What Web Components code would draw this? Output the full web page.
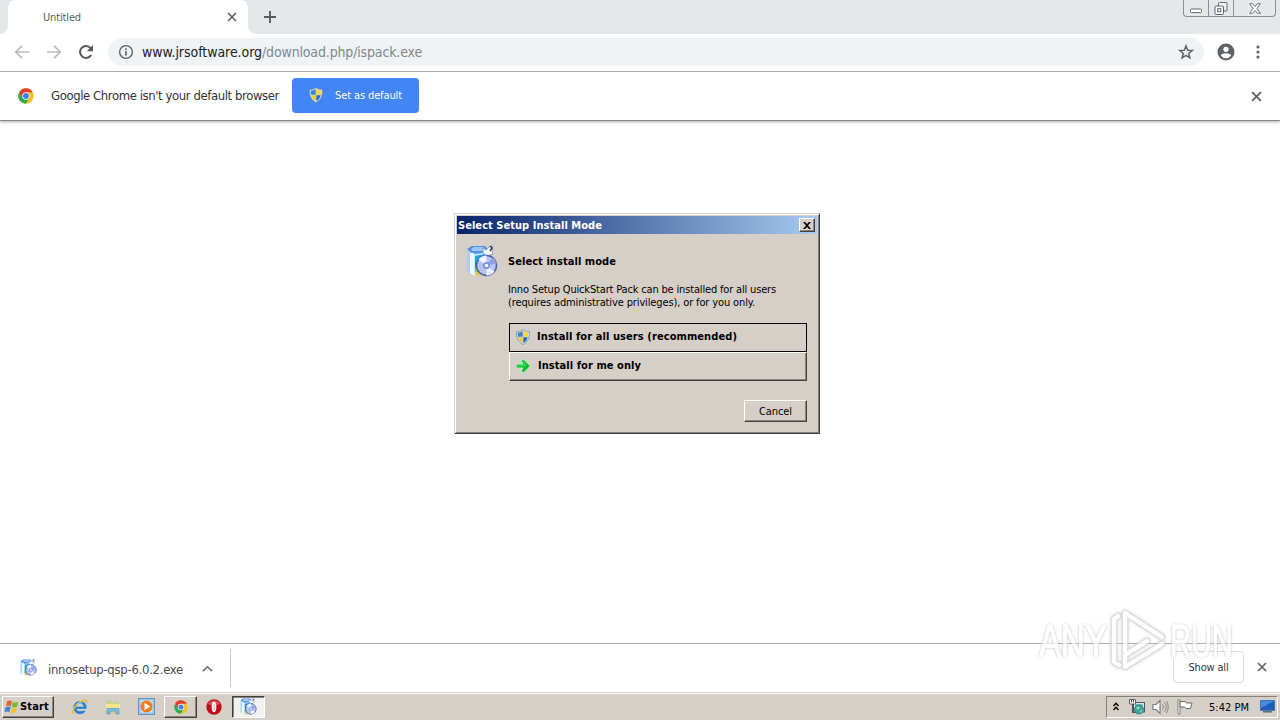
<!DOCTYPE html>
<html lang="en">
<head>
<meta charset="utf-8">
<title>Untitled</title>
<style>
  html, body {
    margin: 0;
    width: 1280px;
    height: 720px;
    overflow: hidden;
    background: #fff;
  }

  body {
    font-family: "DejaVu Sans Condensed", "DejaVu Sans", sans-serif;
    font-stretch: condensed;
    font-size: 11px;
    color: #000;
  }
</style>
</head>
<body>
<desktop-screen></desktop-screen>

<script>
/**
 * The drawings of every icon, by name: [viewBox, markup].
 */
const setupArt = `
  <path d="M1 4l5-3h13l4 4-2 4-13 1z" fill="#4f8ee0"/>
  <path d="M5 4l3-2h9l2 2-1 2H6z" fill="#9cc6f5"/>
  <path d="M1 4l3 5v20l-3-3z" fill="#a9cdf2"/>
  <path d="M4 8h4v23l-4-3z" fill="#eef9ff"/>
  <path d="M8 9l16-2v21L8 31z" fill="#bfe6fb"/>
  <path d="M9 11l10-2v8H9z" fill="#27a3e0"/>
  <path d="M9 17h8v10H9z" fill="#2f9b33"/>
  <path d="M9 23h5v4H9z" fill="#8cc63a"/><path d="M10 27h8v3l-8 1z" fill="#e8c53c"/>
  <path d="M17 3l3 2 3-3 4-1-1 4 1 4-6 2-4-3z" fill="#f5fbff" stroke="#7d94ba" stroke-width=".8"/>
  <path d="M24 1l2 2-2 3" fill="none" stroke="#335" stroke-width="1.5"/>
  <circle cx="20.500" cy="20.500" r="10" fill="#b7c3f4" stroke="#4a5fae" stroke-width="1.4"/>
  <path d="M20.500 20.500l-8-6a10 10 0 0 1 8-4zM20.500 20.500l8 6a10 10 0 0 1-8 4z" fill="#eef2ff"/>
  <path d="M20.500 20.500l10-2a10 10 0 0 0-4-6z" fill="#949fe6"/>
  <circle cx="20.500" cy="20.500" r="3.600" fill="#7f90d8"/><circle cx="20.500" cy="20.500" r="1.700" fill="#fff"/>`

const icons = {
  back: ['0 0 16 16', '<path d="M15 8H2M8 1.8L1.8 8 8 14.2" fill="none" stroke="#b8babd" stroke-width="1.7"/>'],
  forward: ['0 0 16 16', '<path d="M1 8h13M8 1.8L14.2 8 8 14.2" fill="none" stroke="#b8babd" stroke-width="1.7"/>'],
  reload: ['0 0 16 16', '<path d="M13.2 11A6 6 0 1 1 12.6 4" fill="none" stroke="#55585c" stroke-width="2"/><path d="M15 1v6.2H8.8z" fill="#55585c"/>'],
  info: ['0 0 16 16', '<circle cx="8" cy="8" r="6.4" fill="none" stroke="#5f6368" stroke-width="1.4"/><path d="M7.2 7h1.6v4.5H7.2zM7.2 4.3h1.6v1.6H7.2z" fill="#5f6368"/>'],
  star: ['0 0 16 16', '<path d="M8 1.9l1.7 4.3 4.5.3-3.5 2.9 1.2 4.5L8 11.4l-3.9 2.5 1.2-4.5-3.5-2.9 4.5-.3z" fill="none" stroke="#5f6368" stroke-width="1.5"/>'],
  user: ['0 0 18 18', '<circle cx="9" cy="9" r="8.5" fill="#5f6368"/><circle cx="9" cy="6.3" r="2.6" fill="#fff"/><path d="M3.8 12.6c1-3 9.400-3 10.400 0a6.400 6.400 0 0 1-10.400 0z" fill="#fff"/>'],
  dots: ['0 0 4 16', '<circle cx="2" cy="3" r="1.6" fill="#5f6368"/><circle cx="2" cy="8" r="1.6" fill="#5f6368"/><circle cx="2" cy="13" r="1.6" fill="#5f6368"/>'],
  close: ['0 0 10 10', '<path d="M1 1l8 8M9 1L1 9" stroke="#606368" stroke-width="1.700"/>'],
  plus: ['0 0 12 12', '<path d="M6 0v12M0 6h12" stroke="#5a5d61" stroke-width="1.900"/>'],
  chevron: ['0 0 12 8', '<path d="M1 7l5-5 5 5" fill="none" stroke="#6a6d70" stroke-width="1.700"/>'],
  minimize: ['0 0 12 6', '<rect x=".5" y="1" width="11" height="3.600" rx="1" fill="#fff" stroke="#5d6670"/>'],
  restore: ['0 0 14 14', '<rect x="4.500" y=".5" width="8.500" height="8.500" rx="1" fill="#eef1f4" stroke="#5d6670"/><rect x="1" y="4" width="8.500" height="8.500" rx="1" fill="#fff" stroke="#5d6670"/><rect x="3.700" y="6.700" width="3" height="3" fill="#fff" stroke="#5d6670"/>'],
  winclose: ['0 0 12 11', '<path d="M.7.700h3L6 3.500 8.300.700h3L8 5.500l3.300 4.800h-3L6 7.500l-2.300 2.800h-3L4 5.500z" fill="#fff" stroke="#5d6670" stroke-width=".9"/>'],
  chrome: ['0 0 48 48', `
    <circle cx="24" cy="24" r="23" fill="#fbc116"/>
    <path d="M4 12.500A23 23 0 0 0 23.500 47L33.500 29.500 24 24 14 29.500z" fill="#2da94f"/>
    <path d="M4 12.500L14 29.500 24 13h20A23 23 0 0 0 4 12.500z" fill="#e33b2e"/>
    <circle cx="24" cy="24" r="11" fill="#fff"/><circle cx="24" cy="24" r="8.800" fill="#3f80ea"/>`],
  shield: ['0 0 16 16', `
    <path d="M8 .5C6 2 4 2.500 1.500 2.500 1.300 9 3 13 8 15.500c5-2.500 6.700-6.500 6.500-13C12 2.500 10 2 8 .5z" fill="#d8dde2" stroke="#718ba4" stroke-width=".7"/>
    <path d="M7.700 2C6.200 3 4.500 3.600 2.700 3.700c0 1.500.1 2.800.4 4h4.600z" fill="#3c82d8"/>
    <path d="M8.300 2c1.500 1 3.200 1.600 5 1.700 0 1.500-.1 2.800-.4 4H8.300z" fill="#f5d434"/>
    <path d="M3.300 8.300h4.400v5.800c-2.300-1.300-3.700-3.200-4.400-5.800z" fill="#f0cb28"/>
    <path d="M12.700 8.300H8.300v5.800c2.300-1.300 3.700-3.200 4.400-5.800z" fill="#2868c4"/>`],
  arrow: ['0 0 16 16', '<path d="M1 5.500h6L5 1.500h4.500L15.700 8l-6.200 6.500H5l2-4H1z" fill="#b9efbb"/><path d="M1.700 6.400h6.800L6.500 2.300h2.700L14.800 8l-5.600 5.700H6.500l2-4.100H1.700z" fill="#10be32"/><path d="M2.500 7.300h8L8.300 3.500" fill="none" stroke="#55e46a" stroke-width=".9"/>'],
  setup: ['0 0 32 32', setupArt],
  x98: ['0 0 8 7', '<path d="M0 0h2l2 2 2-2h2L5 3.500 8 7H6L4 5 2 7H0l3-3.500z" fill="#000"/>'],
  windows: ['0 0 18 17', `
    <path d="M3.500 2.500c2-1.200 3.800-1 5.500 0L7.700 7.700c-1.800-1-3.700-1-5.600 0z" fill="#e8602c"/>
    <path d="M10 3c1.800 1 4 1 6 0l-1.400 5.200c-2 1-4 1-5.800 0z" fill="#79b833"/>
    <path d="M1.900 8.700c2-1 3.800-1 5.500 0L6 14c-1.800-1-3.700-1-5.600 0z" fill="#3d83d2"/>
    <path d="M8.500 9.200c1.800 1 3.800 1 5.800 0L13 14.400c-2 1-4 1-5.900 0z" fill="#f5c228"/>`],
  ie: ['0 0 16 16', `
    <circle cx="8" cy="8.500" r="5.200" fill="none" stroke="#2585d8" stroke-width="2.800"/>
    <path d="M4 8.800h10" stroke="#2585d8" stroke-width="2.200"/><path d="M9.500 9.900H16v1.900H9.500z" fill="#d6cfc8"/>
    <path d="M1.500 14.800C-1 12 3.500 5.700 9 2.500 12.500.600 16 .3 14.500 4.200" fill="none" stroke="#efb92d" stroke-width="1.500"/>
    <path d="M4.700 5.800c1.500-2.200 4.500-2.500 6-.8" fill="none" stroke="#8dd2fa" stroke-width="1"/>`],
  folder: ['0 0 16 16', `
    <path d="M1 2h5l1 1.500h7V14H1z" fill="#ebc85a"/><path d="M3 1h4v4H3zM9 2.500h5v3H9z" fill="#b9d798"/>
    <path d="M1 5h14v7H1z" fill="#f9e48c"/><path d="M2 15V9.500h12V15h-3v-3H5v3z" fill="#78bee6" stroke="#4e97c6" stroke-width=".7"/>`],
  player: ['0 0 17 17', '<rect x=".5" y=".5" width="16" height="16" fill="#9cc5ea" stroke="#5d96ca"/><rect x="2.500" y="2.500" width="12" height="12" fill="#cfe4f5"/><circle cx="8.500" cy="8.500" r="6" fill="#f27d10"/><path d="M6.500 4.800v7.400l5.700-3.700z" fill="#fff"/>'],
  opera: ['0 0 16 16', '<circle cx="8" cy="8" r="7.700" fill="#bd1019"/><path d="M2 5a7 7 0 0 1 12 0L8 7z" fill="#df5355"/><ellipse cx="8" cy="8" rx="2.300" ry="5.200" fill="#fff"/><ellipse cx="8.200" cy="8" rx=".5" ry="4" fill="#d99"/>'],
  up: ['0 0 6 9', '<path d="M.5 4L3 1.200 5.500 4M.5 8L3 5.200 5.500 8" fill="none" stroke="#000" stroke-width="1.300"/>'],
  network: ['0 0 16 16', `
    <rect x="4.500" y="3.500" width="11" height="9.500" fill="#d7e7ea" stroke="#4b585e"/><path d="M6 5h8v6.500H6z" fill="#7fbcc0"/>
    <path d="M.5.500h6v4.500h-6z" fill="#fff" stroke="#555" stroke-width=".9"/><path d="M2.500 1v2.500M4.500 1v2.500M3.500 5v8.500h3" fill="none" stroke="#555" stroke-width="1.100"/>
    <circle cx="10" cy="10.500" r="4.500" fill="#38a6a8" stroke="#27666c" stroke-width=".7"/><path d="M7 9c1-2 3-2 4 0l-2 2zM10.500 12l3-1-1 3z" fill="#8cdf95"/>`],
  volume: ['0 0 17 16', `
    <path d="M1 5.500h3L8 1.500v13l-4-4H1z" fill="#fff" stroke="#777" stroke-width="1.100"/>
    <path d="M10.500 5.500q2 2.500 0 5M12.500 3.500q3.500 4.500 0 9M14.500 2q3.500 6 0 12" fill="none" stroke="#888" stroke-width="1"/>`],
  flag: ['0 0 16 16', '<path d="M1 .8h2V15H1z" fill="#fff" stroke="#666" stroke-width=".8"/><path d="M3 2.500h5l1.500 1.500H15l-1.500 5.500H9L7.500 8H3z" fill="#fff" stroke="#666" stroke-width="1"/>'],
  monitor: ['0 0 15 13', '<path d="M.5.500h14v9.800H.5z" fill="#1d5dbd" stroke="#3974b8"/><path d="M1 1h13L1 8z" fill="#4b8bdc"/><path d="M3 11.200h9v1.200H3z" fill="#445869"/>'],
  watermark: ['0 0 60 66', `
    <g fill="none" stroke-linejoin="round" stroke-linecap="round">
      <path d="M18 5v38M18 5l37 24M18 59l37-23M18 47l22-14M18 47v12M7 11v43l5 3M7 11l4-3" stroke="#d5d5d5" stroke-width="6.500"/>
      <path d="M18 5v38M18 5l37 24M18 59l37-23M18 47l22-14M18 47v12M7 11v43l5 3M7 11l4-3" stroke="#fff" stroke-width="4.200"/>
    </g>`]
}

/**
 * An icon, drawn as inline SVG.
 */
customElements.define('ui-icon',
  class extends HTMLElement {
    connectedCallback () {
      const [box, art] = icons[this.getAttribute('name')]
      const w = this.getAttribute('w')
      const h = this.getAttribute('h') || w
      this.attachShadow({ mode: 'open' }).innerHTML = `
        <style>
          :host { display: block; flex: none; width: ${w}px; height: ${h}px; }
          svg { display: block; width: 100%; height: 100%; }
        </style>
        <svg viewBox="${box}" preserveAspectRatio="none">${art}</svg>`
    }
  }
)

/**
 * One line of text, tracked so that it fills the given width.
 */
customElements.define('fit-text',
  class extends HTMLElement {
    connectedCallback () {
      const width = Number(this.getAttribute('w'))
      this.attachShadow({ mode: 'open' }).innerHTML = `
        <style>
          :host { display: block; flex: none; width: ${width}px; white-space: nowrap; }
          span { display: inline-block; }
        </style>
        <span><slot></slot></span>`
      const span = this.shadowRoot.querySelector('span')
      const spacing = (width - span.getBoundingClientRect().width) / this.textContent.length
      span.style.letterSpacing = spacing.toFixed(3) + 'px'
    }
  }
)

/**
 * Tab strip with the window buttons.
 */
customElements.define('tab-strip',
  class extends HTMLElement {
    connectedCallback () {
      this.attachShadow({ mode: 'open' }).innerHTML = `
        <style>
          :host { display: flex; height: 34px; background: #e4e8eb; padding-left: 8px; }
          .tab {
            display: flex; align-items: center; box-sizing: border-box;
            width: 240px; padding: 0 11px 0 35px; background: #fff;
            border-radius: 8px 8px 0 0; color: #5a5d60; position: relative;
          }
          .tab::before, .tab::after {
            content: ""; position: absolute; bottom: 0; width: 8px; height: 8px;
          }
          .tab::before { left: -8px; background: radial-gradient(circle at 0 0, transparent 7.5px, #fff 8px); }
          .tab::after { right: -8px; background: radial-gradient(circle at 100% 0, transparent 7.5px, #fff 8px); }
          .tab ui-icon { margin-left: auto; }
          .add { margin: 11px 0 0 16px; }
          .buttons {
            display: flex; margin: 0 4px 0 auto; box-sizing: border-box; width: 93px; height: 17px;
            border: 1px solid #8a9097; border-top: 0; border-radius: 0 0 4px 4px; overflow: hidden;
          }
          .buttons div { display: flex; justify-content: center; box-sizing: border-box; height: 17px; }
          .buttons div + div { border-left: 1px solid #8a9097; }
        </style>
        <div class="tab"><fit-text w="38">Untitled</fit-text><ui-icon name="close" w="10"></ui-icon></div>
        <ui-icon class="add" name="plus" w="12"></ui-icon>
        <div class="buttons">
          <div style="width:24px"><ui-icon name="minimize" w="12" h="6" style="margin-top:8px"></ui-icon></div>
          <div style="width:25px"><ui-icon name="restore" w="14" style="margin-top:2px"></ui-icon></div>
          <div style="width:42px"><ui-icon name="winclose" w="12" h="11" style="margin-top:3px"></ui-icon></div>
        </div>`
    }
  }
)

/**
 * Toolbar with navigation and address.
 */
customElements.define('tool-bar',
  class extends HTMLElement {
    connectedCallback () {
      this.attachShadow({ mode: 'open' }).innerHTML = `
        <style>
          :host {
            display: flex; align-items: center; box-sizing: border-box; height: 38px;
            padding: 0 20px 1px 14px; border-bottom: 1px solid #a9abad; background: #fff;
          }
          .nav { display: flex; gap: 16px; }
          .address {
            display: flex; align-items: center; box-sizing: border-box; width: 1096px; height: 28px;
            margin-left: 14px; padding: 0 10px; border-radius: 14px; background: #f0f3f5; font-size: 14px;
          }
          .host { margin-left: 8px; color: #202124; }
          .path { color: #80868b; }
          .star { margin-left: auto; }
          .user { margin-left: 13px; }
          .dots { margin-left: auto; }
        </style>
        <div class="nav">
          <ui-icon name="back" w="16"></ui-icon>
          <ui-icon name="forward" w="16"></ui-icon>
          <ui-icon name="reload" w="16"></ui-icon>
        </div>
        <div class="address">
          <ui-icon name="info" w="16"></ui-icon>
          <fit-text class="host" w="120">www.jrsoftware.org</fit-text>
          <fit-text class="path" w="160">/download.php/ispack.exe</fit-text>
          <ui-icon class="star" name="star" w="16"></ui-icon>
        </div>
        <ui-icon class="user" name="user" w="18"></ui-icon>
        <ui-icon class="dots" name="dots" w="4" h="16"></ui-icon>`
    }
  }
)

/**
 * Bar that asks to make the browser the default one.
 */
customElements.define('info-bar',
  class extends HTMLElement {
    connectedCallback () {
      this.attachShadow({ mode: 'open' }).innerHTML = `
        <style>
          :host {
            display: flex; align-items: center; box-sizing: border-box; height: 49px;
            padding: 0 18px 1px 18px; border-bottom: 1px solid #858585; background: #fff;
            box-shadow: 0 1px 3px #aaa; color: #333; font-size: 13px; z-index: 1;
          }
          .message { margin-left: 17px; }
          button {
            display: flex; align-items: center; width: 127px; height: 35px; margin: -1px 0 0 13px; padding: 0 0 0 16px;
            border: 0; border-radius: 4px; background: #4285f4; color: #fff; font: inherit; font-size: 11px; text-align: left;
          }
          button fit-text { margin-left: 11px; }
          .close { margin: 1px 0 0 auto; }
        </style>
        <ui-icon name="chrome" w="16"></ui-icon>
        <fit-text class="message" w="228">Google Chrome isn't your default browser</fit-text>
        <button><ui-icon name="shield" w="16"></ui-icon><fit-text w="67">Set as default</fit-text></button>
        <ui-icon class="close" name="close" w="11"></ui-icon>`
    }
  }
)

/**
 * Shelf with the downloaded file.
 */
customElements.define('download-shelf',
  class extends HTMLElement {
    connectedCallback () {
      this.attachShadow({ mode: 'open' }).innerHTML = `
        <style>
          :host {
            display: flex; align-items: center; box-sizing: border-box; height: 49px;
            padding: 0 13px 0 0; border-top: 1px solid #a9abad; background: #fff; color: #4a4a4a;
          }
          .item {
            display: flex; align-items: center; box-sizing: border-box; width: 231px; height: 38px;
            padding-left: 20px; border-right: 1px solid #c4c4c4;
          }
          .name { margin: 3px 19px 0 11px; font-size: 13px; }
          .all {
            display: flex; align-items: center; justify-content: center; box-sizing: border-box;
            width: 71px; height: 32px; margin: -2px 13px 0 auto; padding: 0;
            border: 1px solid #dadce0; border-radius: 4px; background: #fff; color: #333;
            font: inherit; font-size: 11px;
          }
        </style>
        <div class="item">
          <ui-icon name="setup" w="17" style="margin-top:-2px"></ui-icon>
          <fit-text class="name" w="135">innosetup-qsp-6.0.2.exe</fit-text>
          <ui-icon name="chevron" w="11" h="7"></ui-icon>
        </div>
        <button class="all"><fit-text w="40">Show all</fit-text></button>
        <ui-icon name="close" w="10" style="margin-top:-2px"></ui-icon>`
    }
  }
)

/**
 * Classic button with a raised edge.
 */
customElements.define('classic-button',
  class extends HTMLElement {
    connectedCallback () {
      this.attachShadow({ mode: 'open' }).innerHTML = `
        <style>
          :host {
            display: flex; align-items: center; box-sizing: border-box; background: #d6cfc8;
            border: 1px solid; border-color: #fff #404040 #404040 #fff;
            box-shadow: inset -1px -1px #8a8782;
          }
          :host([focused]) { border-color: #000; box-shadow: none; }
          :host([pressed]) { background: #f3f1ee; border-color: #404040 #fff #fff #404040; box-shadow: inset 1px 1px #8a8782; }
        </style>
        <slot></slot>`
    }
  }
)

/**
 * Dialog for the choice of install mode.
 */
customElements.define('install-dialog',
  class extends HTMLElement {
    connectedCallback () {
      this.attachShadow({ mode: 'open' }).innerHTML = `
        <style>
          :host {
            display: flex; flex-direction: column; box-sizing: border-box; width: 366px; height: 221px;
            padding: 2px 2px 3px 2px; background: #d6cfc8; border: 1px solid;
            border-color: #d6cfc8 #404040 #404040 #d6cfc8;
            box-shadow: inset 1px 1px #fff, inset -1px -1px #85827d;
          }
          header {
            display: flex; align-items: center; box-sizing: border-box; height: 18px; padding: 0 2px 0 1px;
            background: linear-gradient(90deg, #0a246a, #a6caf0); color: #fff; font-weight: bold;
          }
          .x { width: 16px; height: 14px; margin-left: auto; justify-content: center; }
          main { display: grid; grid-template-columns: 41px 298px; padding: 11px 0 0 10px; }
          .logo { margin-left: -1px; }
          h1 { margin: 10px 0 0; height: 28px; font-size: 11px; line-height: 14px; }
          .copy { line-height: 13px; height: 40px; }
          .choices { display: flex; flex-direction: column; margin-left: 1px; width: 298px; font-weight: bold; }
          .choices classic-button { height: 29px; padding: 0 0 3px 5px; }
          .choices fit-text { margin-left: 6px; }
          .choices ui-icon { margin-top: 1px; }
          .cancel { width: 63px; height: 22px; margin: 19px 0 0 236px; justify-content: center; }
        </style>
        <header>
          <fit-text w="144">Select Setup Install Mode</fit-text>
          <classic-button class="x"><ui-icon name="x98" w="8" h="7"></ui-icon></classic-button>
        </header>
        <main>
          <ui-icon class="logo" name="setup" w="32"></ui-icon>
          <div>
            <h1><fit-text w="108">Select install mode</fit-text></h1>
            <div class="copy">
              <fit-text w="268">Inno Setup QuickStart Pack can be installed for all users</fit-text>
              <fit-text w="247">(requires administrative privileges), or for you only.</fit-text>
            </div>
            <div class="choices">
              <classic-button focused><ui-icon name="shield" w="16"></ui-icon><fit-text w="200">Install for all users (recommended)</fit-text></classic-button>
              <classic-button><ui-icon name="arrow" w="16"></ui-icon><fit-text w="103" style="margin-left:7px">Install for me only</fit-text></classic-button>
            </div>
            <classic-button class="cancel"><fit-text w="33">Cancel</fit-text></classic-button>
          </div>
        </main>`
    }
  }
)

/**
 * Task bar with the start button and the tray.
 */
customElements.define('task-bar',
  class extends HTMLElement {
    connectedCallback () {
      this.attachShadow({ mode: 'open' }).innerHTML = `
        <style>
          :host {
            display: flex; align-items: center; box-sizing: border-box; height: 28px; padding: 2px 2px 1px;
            background: #d6cfc8; box-shadow: inset 0 1px #d6cfc8, inset 0 2px #fff;
          }
          .start { width: 52px; height: 22px; padding-left: 1px; font-weight: bold; font-size: 11px; }
          .quick { display: flex; align-items: center; gap: 17px; margin: 0 9px 0 18px; }
          .app { width: 33px; height: 22px; justify-content: center; }
          .opera { margin: 0 10px 0 9px; }
          .tray {
            display: flex; align-items: center; box-sizing: border-box; width: 172px; height: 22px;
            margin-left: auto; padding: 0 2px 0 6px; border: 1px solid; border-color: #858179 #fff #fff #858179;
          }
        </style>
        <classic-button class="start"><ui-icon name="windows" w="16" h="16"></ui-icon><fit-text w="29">Start</fit-text></classic-button>
        <div class="quick">
          <ui-icon name="ie" w="16"></ui-icon>
          <ui-icon name="folder" w="16"></ui-icon>
          <ui-icon name="player" w="17"></ui-icon>
        </div>
        <classic-button class="app"><ui-icon name="chrome" w="14"></ui-icon></classic-button>
        <ui-icon class="opera" name="opera" w="16"></ui-icon>
        <classic-button class="app" pressed><ui-icon name="setup" w="17"></ui-icon></classic-button>
        <div class="tray">
          <ui-icon name="up" w="6" h="9"></ui-icon>
          <ui-icon name="network" w="16" style="margin-left:10px"></ui-icon>
          <ui-icon name="volume" w="17" h="16" style="margin-left:7px"></ui-icon>
          <ui-icon name="flag" w="16" style="margin-left:8px"></ui-icon>
          <fit-text w="40" style="margin:1px 0 0 16px">5:42 PM</fit-text>
          <ui-icon name="monitor" w="15" h="13" style="margin-left:auto"></ui-icon>
        </div>`
    }
  }
)

/**
 * Watermark laid over the corner of the page.
 */
customElements.define('water-mark',
  class extends HTMLElement {
    connectedCallback () {
      this.attachShadow({ mode: 'open' }).innerHTML = `
        <style>
          :host {
            display: flex; align-items: center; width: 200px; height: 66px; opacity: .8;
            color: #fff; font: 46px/46px "Liberation Sans Narrow", "Liberation Sans", sans-serif;
          }
          b {
            display: block; font-weight: normal; transform-origin: 0 50%; -webkit-text-stroke: 1.4px #fff;
            text-shadow: 0 0 2px #aaa, 0 0 3px #bbb, 0 0 4px #ccc;
          }
          .any { width: 68px; transform: scaleX(.72); }
          .run { width: 64px; transform: scaleX(.63); }
          ui-icon { filter: drop-shadow(0 0 1.5px #bbb); }
        </style>
        <b class="any">ANY</b>
        <ui-icon name="watermark" w="60" h="66"></ui-icon>
        <b class="run" style="margin-left:3px">RUN</b>`
    }
  }
)

/**
 * The whole screen.
 */
customElements.define('desktop-screen',
  class extends HTMLElement {
    connectedCallback () {
      this.attachShadow({ mode: 'open' }).innerHTML = `
        <style>
          :host { display: flex; flex-direction: column; width: 1280px; height: 720px; position: relative; }
          .page { flex: 1; }
          install-dialog { position: absolute; left: 454px; top: 213px; }
          water-mark { position: absolute; left: 1039px; top: 608px; }
        </style>
        <tab-strip></tab-strip>
        <tool-bar></tool-bar>
        <info-bar></info-bar>
        <div class="page"></div>
        <download-shelf></download-shelf>
        <task-bar></task-bar>
        <install-dialog></install-dialog>
        <water-mark></water-mark>`
    }
  }
)
</script>
</body>
</html>
